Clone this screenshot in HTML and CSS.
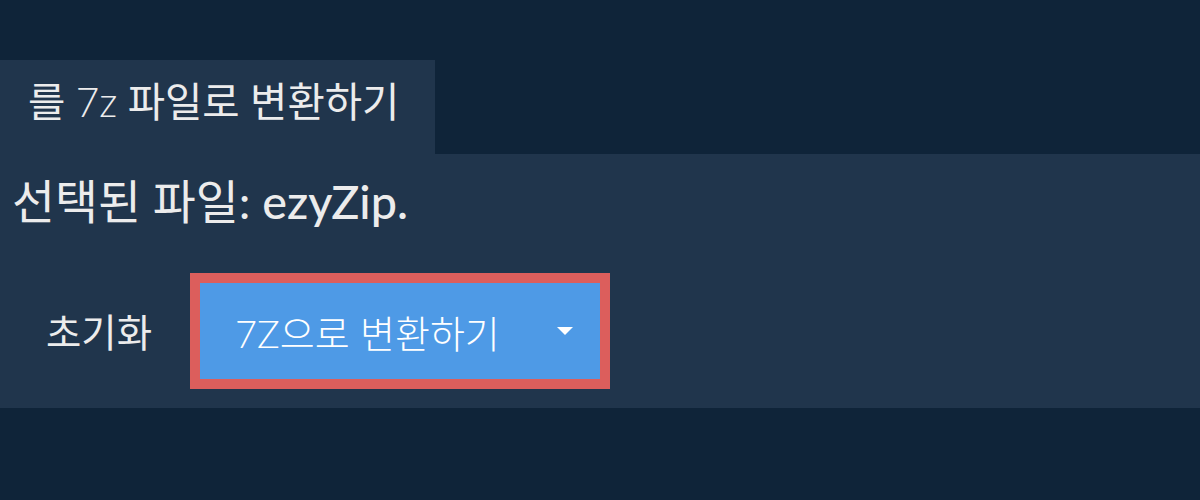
FILE: index.html
```html
<!DOCTYPE html>
<html lang="ko">
<head>
<meta charset="utf-8">
<link rel="stylesheet" href="styles.css">
</head>
<body>
<div class="page">
  <div class="tab">를 <span class="lat">7z</span> 파일로 변환하기</div>
  <div class="panel">
    <div class="title">선택된 파일: <span class="fname">ezyZip.</span></div>
    <div class="actions">
      <button class="reset">초기화</button>
      <div class="convert-wrap">
        <button class="convert">
          <span class="convert-label">7Z으로 변환하기</span>
          <span class="caret"></span>
        </button>
      </div>
    </div>
  </div>
</div>
</body>
</html>
```

FILE: styles.css
```css
html, body {
  margin: 0;
  padding: 0;
}
body {
  background: #0f2439;
  color: #ececec;
  font-family: Lato, "Noto Sans CJK KR", sans-serif;
  width: 1200px;
  height: 500px;
  overflow: hidden;
}
.page {
  padding-top: 60px;
}
.tab {
  width: 435px;
  height: 94px;
  box-sizing: border-box;
  background: #20354c;
  padding-left: 28px;
  font-size: 40.6px;
  line-height: 83px;
  font-weight: 400;
  white-space: nowrap;
}
.tab .lat {
  font-weight: 300;
}
.panel {
  background: #20354c;
  height: 254px;
  box-sizing: border-box;
  padding: 17px 12px 0;
}
.title {
  font-size: 46.7px;
  line-height: 60px;
  font-weight: 400;
  white-space: nowrap;
}
.title .fname {
  font-weight: 500;
}
.actions {
  display: flex;
  align-items: center;
  margin-top: 42px;
  height: 116px;
}
.reset {
  background: none;
  border: 0;
  color: #ececec;
  font-family: inherit;
  font-size: 38.4px;
  padding: 0 0 3px;
  margin-left: 34px;
  width: 144px;
  text-align: left;
}
.convert-wrap {
  border: 10px solid #dc5e5c;
  width: 400px;
  height: 96px;
}
.convert {
  width: 100%;
  height: 100%;
  background: #4e9ae6;
  border: 0;
  color: #ffffff;
  font-family: inherit;
  font-size: 38px;
  font-weight: 300;
  display: flex;
  align-items: center;
  justify-content: space-between;
  padding: 0 27px 0 35px;
  box-sizing: border-box;
}
.caret {
  width: 0;
  height: 0;
  border-left: 8px solid transparent;
  border-right: 8px solid transparent;
  border-top: 8px solid #ffffff;
}
```
